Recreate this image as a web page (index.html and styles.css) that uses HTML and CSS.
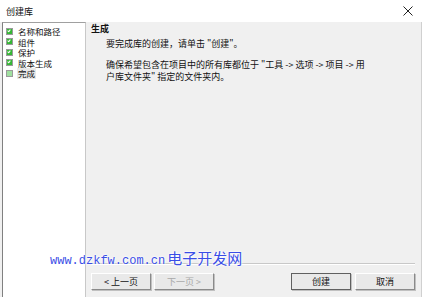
FILE: index.html
```html
<!DOCTYPE html>
<html lang="zh-cn">
<head>
    <meta charset="UTF-8">
    <meta name="viewport" content="width=device-width, initial-scale=1.0">
    <title>创建库</title>
    <link rel="stylesheet" href="styles.css">
</head>
<body>
    <div class="ventana">
        <div class="barraTitulo">
            <span class="titulo">创建库</span>
            <svg class="cerrar" width="10" height="10" viewBox="0 0 10 10">
                <path d="M0.5 0.5 L9.5 9.5 M9.5 0.5 L0.5 9.5" stroke="#222" stroke-width="1" fill="none"/>
            </svg>
        </div>
        <div class="cuerpo">
            <ul class="arbol">
                <li><span class="check"></span>名称和路径</li>
                <li><span class="check"></span>组件</li>
                <li><span class="check"></span>保护</li>
                <li><span class="check"></span>版本生成</li>
                <li class="actual"><span class="check vacio"></span><span class="sel">完成</span></li>
            </ul>
            <div class="contenido">
                <div class="cabecera">生成</div>
                <p class="intro">要完成库的创建，请单击 "创建"。</p>
                <p class="nota">确保希望包含在项目中的所有库都位于 "工具 -&gt; 选项 -&gt; 项目 -&gt; 用<br>户库文件夹" 指定的文件夹内。</p>
                <div class="relleno"></div>
                <div class="separador"></div>
                <div class="botones">
                    <button class="boton">&lt; 上一页</button>
                    <button class="boton" disabled>下一页 &gt;</button>
                    <span class="hueco"></span>
                    <button class="boton defecto">创建</button>
                    <button class="boton">取消</button>
                </div>
            </div>
        </div>
        <div class="marcaAgua"><span class="web">www.dzkfw.com.cn</span> <span class="nombre">电子开发网</span></div>
    </div>
</body>
</html>
```

FILE: styles.css
```css
body {
    margin: 0;
    font-family: "Noto Sans CJK SC", "Liberation Sans", sans-serif;
    font-size: 9px;
    color: #111;
}
.ventana {
    position: relative;
    width: 422px;
    height: 297px;
    background-color: #f0f0f0;
    display: flex;
    flex-direction: column;
    overflow: hidden;
}
.barraTitulo {
    height: 22px;
    background-color: #fff;
    display: flex;
    align-items: center;
    padding: 0 9px 0 6px;
}
.titulo {
    flex: 1;
    font-size: 9px;
    padding-top: 1px;
}
.cuerpo {
    flex: 1;
    display: flex;
    border-right: 1px solid #d0d0d0;
}
.arbol {
    list-style: none;
    margin: 0 0 0 2px;
    padding: 3px 0 0 2px;
    width: 80px;
    background-color: #fff;
    border-top: 1px solid #a0a0a0;
    border-left: 1px solid #808080;
    border-right: 1px solid #c8c8c8;
}
.arbol li {
    height: 10.5px;
    line-height: 10.5px;
    font-size: 8.5px;
    display: flex;
    align-items: center;
    white-space: nowrap;
}
.check {
    width: 5px;
    height: 5px;
    margin: 0 5px 0 1px;
    background-color: #35b735;
    border: 1px solid #9a9a9a;
    position: relative;
}
.check::after {
    content: "";
    position: absolute;
    left: 1px;
    top: 0;
    width: 1px;
    height: 2px;
    border-right: 1px solid #fff;
    border-bottom: 1px solid #fff;
    transform: rotate(40deg);
}
.check.vacio {
    background-color: #9fe09f;
}
.check.vacio::after {
    display: none;
}
.sel {
    background-color: #e8e8e8;
    padding: 0 1px;
    margin-left: -1px;
}
.contenido {
    flex: 1;
    display: flex;
    flex-direction: column;
    padding: 1px 6px 7px 5px;
}
.cabecera {
    font-weight: bold;
    line-height: 12px;
}
.intro {
    margin: 3px 0 0 15px;
    line-height: 12px;
}
.nota {
    margin: 9px 0 0 15px;
    line-height: 12px;
}
.relleno {
    flex: 1;
}
.separador {
    border-top: 1px solid #c8c8c8;
    border-bottom: 1px solid #fff;
    margin-bottom: 8px;
}
.botones {
    display: flex;
    gap: 3px;
}
.hueco {
    flex: 1;
}
.boton {
    width: 60px;
    height: 17px;
    padding: 0;
    font-family: inherit;
    font-size: 9px;
    color: #111;
    background-color: #e9e9e9;
    border: 1px solid;
    border-color: #fff #8a8a8a #8a8a8a #fff;
    box-shadow: 1px 1px 0 #c0c0c0;
}
.boton:disabled {
    color: #a8a8a8;
}
.boton.defecto {
    border-color: #606060;
    margin-right: 1px;
}
.marcaAgua {
    position: absolute;
    left: 50px;
    top: 247px;
    color: #3a4ee6;
    white-space: nowrap;
    text-shadow: 0 0 2px #fff, 0 0 2px #fff, 0 0 3px #fff;
}
.web {
    font-family: "Liberation Mono", monospace;
    font-size: 12px;
}
.nombre {
    font-size: 15px;
}
```
